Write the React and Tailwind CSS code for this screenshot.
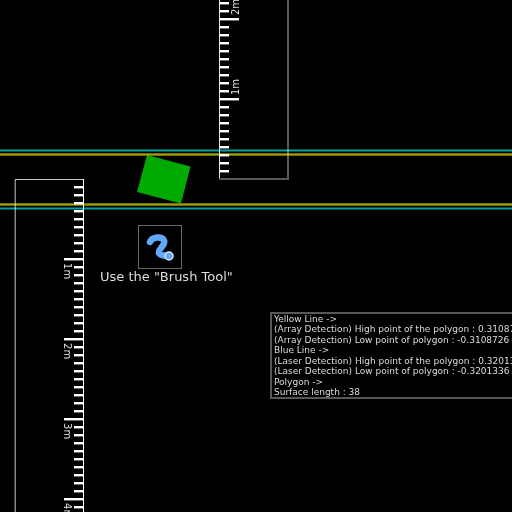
const MINOR_GAP = 8;

/* A vertical scale: one tick each 8px, a longer one with its label each metre. */
function Scale({ x, origin, dir, count }) {
  const ticks = Array.from({ length: count }, (_, i) => i + 1);
  return (
    <g>
      {ticks.map((n) => {
        const major = n % 10 === 0;
        const y = origin + dir * n * MINOR_GAP;
        const length = major ? 19 : 9;
        const left = dir > 0 ? x - length : x + 1;
        return (
          <g key={n}>
            <rect x={left} y={y - 1} width={length} height="2" fill="#ffffff" />
            <rect x={left} y={y + 1} width={length} height="1" fill="#707070" />
            {major && (
              <text
                transform={dir > 0 ? `translate(${x - 19} ${y + 4}) rotate(90)` : `translate(${x + 20} ${y - 4}) rotate(-90)`}
                fontSize="10"
                fill="#e0e0e0"
              >
                {n / 10}m
              </text>
            )}
          </g>
        );
      })}
    </g>
  );
}

function DetectionLine({ y, color, dim }) {
  return (
    <g>
      <rect x="0" y={y - 1} width="100%" height="3" fill={dim} />
      <rect x="0" y={y} width="100%" height="1" fill={color} />
    </g>
  );
}

function Scene() {
  return (
    <svg className="block h-screen w-full" aria-label="Detection scene">
      <polygon points="147,155 190.500,166.500 181,203.500 137,192" fill="#00aa00" />
      <rect x="219" y="0" width="1" height="179" fill="#e8e8e8" />
      <rect x="287" y="0" width="2" height="180" fill="#585858" />
      <rect x="219" y="178" width="70" height="2" fill="#585858" />
      <Scale x={219} origin={179} dir={-1} count={22} />
      <rect x="15" y="179" width="69" height="1" fill="#c8c8c8" />
      <rect x="14" y="180" width="1" height="100%" fill="#404040" />
      <rect x="15" y="180" width="1" height="100%" fill="#888888" />
      <rect x="83" y="179" width="1" height="100%" fill="#ffffff" />
      <Scale x={83} origin={179} dir={1} count={60} />
      <g className="mix-blend-screen">
        <DetectionLine y={150} color="#00a0a0" dim="#005050" />
        <DetectionLine y={154} color="#a4a400" dim="#6c6c00" />
        <DetectionLine y={204} color="#a4a400" dim="#6c6c00" />
        <DetectionLine y={208} color="#00a0a0" dim="#005050" />
      </g>
    </svg>
  );
}

function BrushIcon() {
  return (
    <svg className="size-full" viewBox="0 0 42 42" fill="none" aria-hidden="true">
      <path
        d="M11 16C13 10.500 23 10 25 14.500C27 19.500 18.500 23 20 27C21 29.500 25 29.500 29 30"
        stroke="#62a8f8"
        strokeWidth="6.500"
        strokeLinecap="round"
        strokeLinejoin="round"
      />
      <circle cx="30" cy="30" r="4" fill="#62a8f8" stroke="#d8e4f4" strokeWidth="1.500" />
    </svg>
  );
}

const READOUT = [
  "Yellow Line ->",
  "(Array Detection) High point of the polygon : 0.3108726",
  "(Array Detection) Low point of polygon : -0.3108726",
  "Blue Line ->",
  "(Laser Detection) High point of the polygon : 0.3201336",
  "(Laser Detection) Low point of polygon : -0.3201336",
  "Polygon ->",
  "Surface length : 38",
];

export default function App() {
  return (
    <main className="relative h-screen overflow-hidden bg-black font-['DejaVu_Sans',sans-serif] text-[#dcdcdc]">
      <Scene />
      <div className="absolute top-[225px] left-[100px] whitespace-nowrap">
        <button type="button" aria-label="Brush Tool" className="ml-[38px] block size-11 border border-[#666666] bg-black">
          <BrushIcon />
        </button>
        <p className="text-[13px] leading-4">Use the "Brush Tool"</p>
      </div>
      <div className="absolute top-[312px] left-[270px] flex h-[87px] flex-col justify-between border-2 border-[#585858] pl-[2px] text-[9px] leading-[10px] whitespace-nowrap">
        {READOUT.map((line) => (
          <p key={line}>{line}</p>
        ))}
      </div>
    </main>
  );
}
